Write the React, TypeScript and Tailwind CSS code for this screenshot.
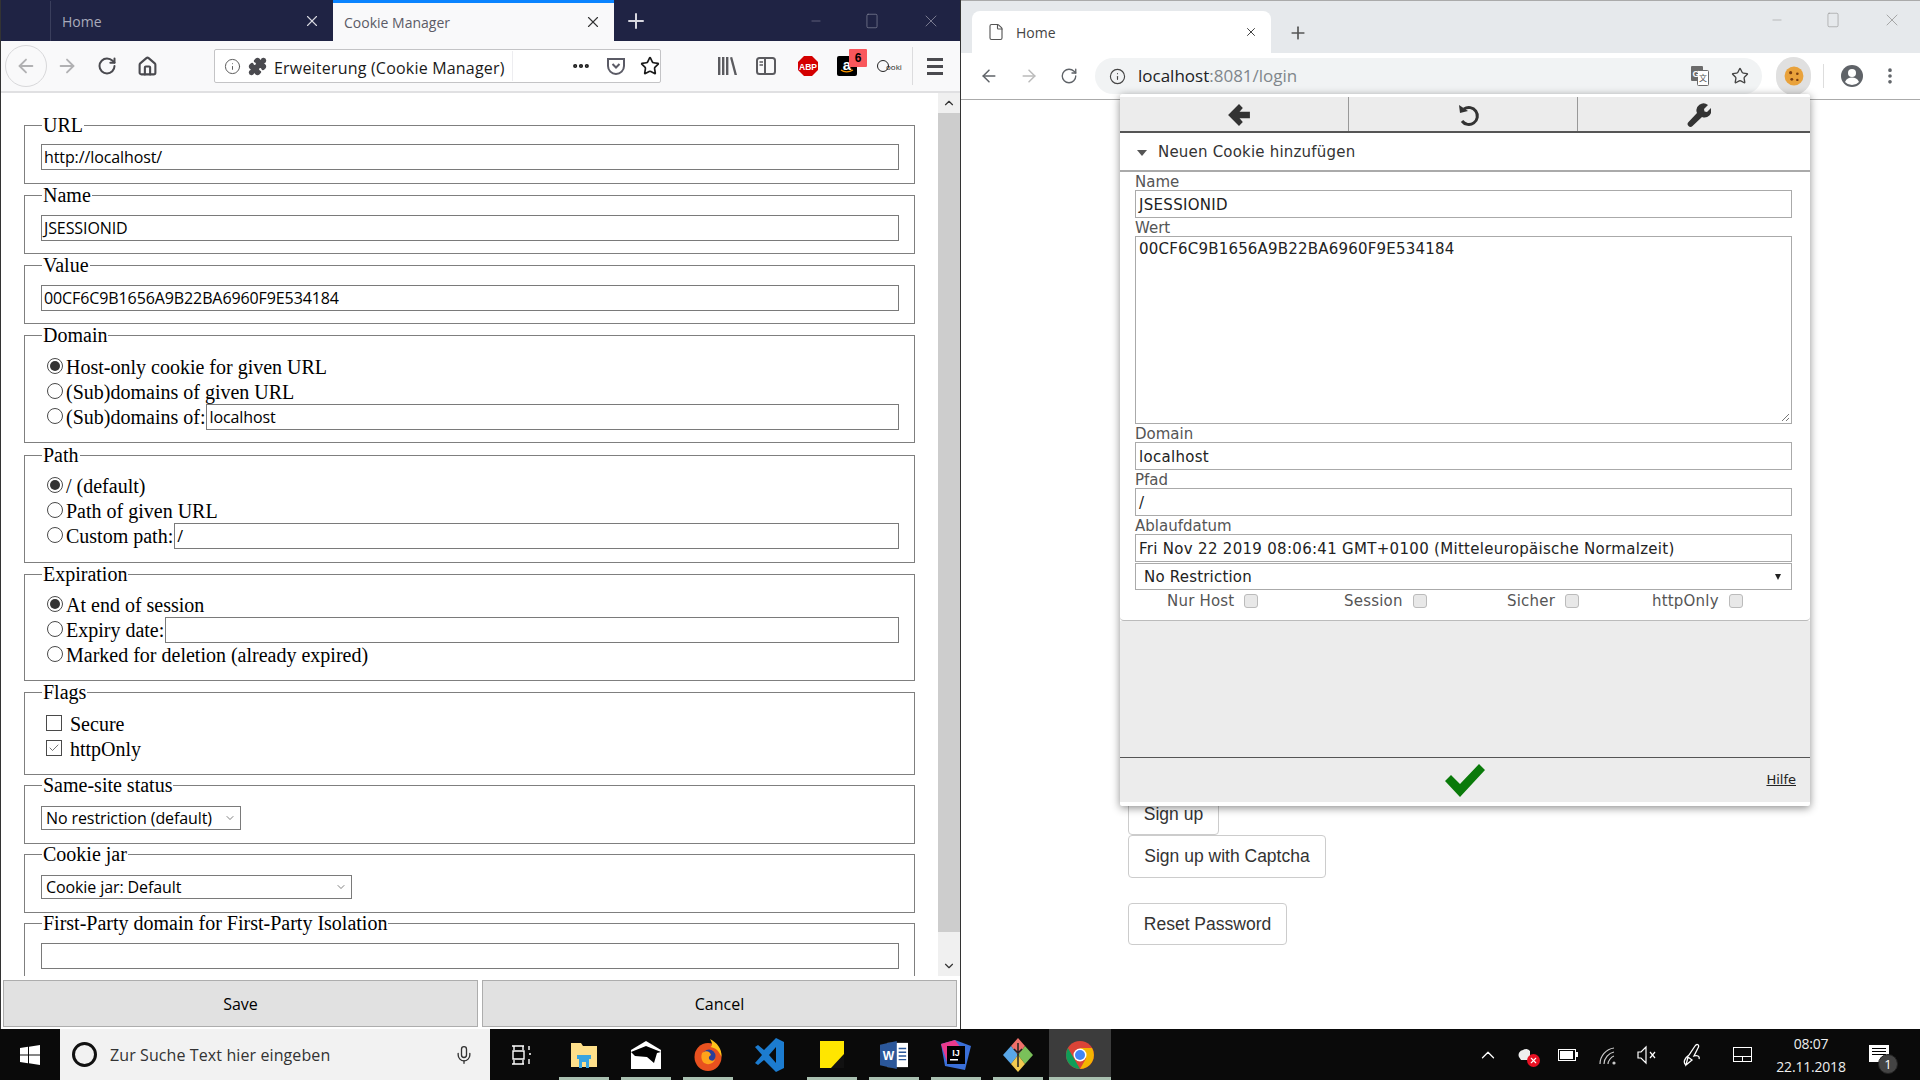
import React from 'react';
import {
  ArrowLeft,
  ArrowRight,
  RotateCw,
  House,
  Info,
  Puzzle,
  Ellipsis,
  Star,
  X,
  Plus,
  Minus,
  Square,
  ChevronUp,
  ChevronDown,
  File,
  EllipsisVertical,
  Mic,
  Check,
} from 'lucide-react';

const serif = 'font-["Liberation_Serif","Times_New_Roman",serif]';
const ui = 'font-["Open_Sans","Noto_Sans",sans-serif]';

const Field = ({ legend, children, className = '' }: { legend: string; children: React.ReactNode; className?: string }) => (
  <fieldset className={`border border-[#7f7f7f] pl-[16px] pr-[15px] ${className}`}>
    <legend className={`ml-[1px] px-[1px] h-[21px] leading-[21px] text-[20px] text-black ${serif}`}>{legend}</legend>
    {children}
  </fieldset>
);

const TextBox = ({ value, className = '' }: { value: string; className?: string }) => (
  <div className={`h-[26px] border border-[#7a7a7a] bg-white pl-[2px] text-[16px] leading-[24px] tracking-[-0.1px] text-black ${ui} ${className}`}>
    {value}
  </div>
);

const Radio = ({ checked = false }: { checked?: boolean }) => (
  <span className="w-[16px] h-[16px] -mt-[2px] rounded-full border border-[#4a4a4a] bg-white flex items-center justify-center shrink-0 mr-[3px]">
    {checked && <span className="w-[10px] h-[10px] rounded-full bg-[#333]" />}
  </span>
);

const RadioRow = ({ label, checked, value }: { label: string; checked?: boolean; value?: string }) => (
  <div className={`flex items-center h-[25px] ml-[6px] text-[20px] text-black ${serif}`}>
    <Radio checked={checked} />
    <span className="whitespace-nowrap mr-[1px]">{label}</span>
    {value !== undefined && <TextBox value={value} className="flex-1" />}
  </div>
);

const Select = ({ label, className }: { label: string; className: string }) => (
  <div className={`h-[24px] border border-[#7a7a7a] bg-white flex items-center justify-between pl-[4px] pr-[4px] text-[16px] tracking-[-0.1px] text-black ${ui} ${className}`}>
    <span>{label}</span>
    <ChevronDown size={12} strokeWidth={1} />
  </div>
);

const FirefoxWindow = () => (
  <div className="w-[960px] flex flex-col border-l border-[#333]">
    {/* tabs */}
    <div className="h-[41px] bg-[#1f2344] flex items-stretch text-[14px] pt-[1px]">
      <div className="w-[50px] border-r border-[#3a3e5c]" />
      <div className={`w-[282px] flex items-center justify-between pl-[11px] pr-[12px] text-[#a9abbb] ${ui}`}>
        <span>Home</span>
        <X size={18} strokeWidth={1.5} className="text-[#d8d8e0]" />
      </div>
      <div className={`w-[281px] -mt-[1px] flex items-center justify-between pl-[11px] pr-[12px] bg-[#f9f9fa] border-t-[3px] border-[#0a84ff] text-[#5b5b66] ${ui}`}>
        <span>Cookie Manager</span>
        <X size={18} strokeWidth={1.5} className="text-[#333]" />
      </div>
      <div className="w-[44px] flex items-center justify-center text-[#d8d8e0]">
        <Plus size={24} strokeWidth={2} />
      </div>
      <div className="flex-1 flex items-center justify-end text-[#8a8c9f] gap-[40px] pr-[19px]">
        <Minus size={14} strokeWidth={1} />
        <Square size={18} strokeWidth={1} className="scale-x-75" />
        <X size={20} strokeWidth={1} />
      </div>
    </div>
    {/* toolbar */}
    <div className="h-[52px] bg-[#f9f9fa] border-b-2 border-[#e0e0e2] flex items-center text-[#4a4a4f]">
      <div className="w-[42px] h-[42px] ml-[4px] rounded-full border border-[#d8d8da] flex items-center justify-center text-[#b1b1b3]">
        <ArrowLeft size={22} />
      </div>
      <ArrowRight size={22} className="ml-[9px] text-[#b1b1b3]" />
      <RotateCw size={20} strokeWidth={2.4} className="ml-[19px]" />
      <House size={21} strokeWidth={2.4} className="ml-[20px]" />
      <div className={`ml-[56px] w-[447px] h-[34px] bg-white border border-[#c4c4c6] rounded-[2px] flex items-center pl-[9px] text-[16px] text-[#1a1a1a] ${ui}`}>
        <Info size={17} strokeWidth={1.4} className="text-[#5b5b5b] shrink-0" />
        <Puzzle size={19} fill="#4a4a4f" className="ml-[7px] text-[#4a4a4f] shrink-0" />
        <span className="ml-[7px] w-[241px] pt-[3px] tracking-[0.2px] whitespace-nowrap">Erweiterung (Cookie Manager)</span>
        <div className="w-px h-[30px] bg-[#ededf0] shrink-0" />
        <Ellipsis size={20} strokeWidth={3} className="ml-[58px] shrink-0" />
        <svg width="20" height="20" viewBox="0 0 20 20" className="ml-[15px] shrink-0" fill="none" stroke="#5b5b66" strokeWidth="2">
          <path d="M2 3h16v7a8 8 0 0 1-16 0z" />
          <path d="M6.5 8l3.5 3.500L13.500 8" />
        </svg>
        <Star size={20} strokeWidth={2} className="ml-[14px] shrink-0" />
      </div>
      <svg width="20" height="22" viewBox="0 0 20 22" className="ml-[56px]" fill="#5b5b5f">
        <rect x="1" y="2" width="2.400" height="18" />
        <rect x="5" y="2" width="2.400" height="18" />
        <rect x="9" y="2" width="2.400" height="18" />
        <path d="M13 2.500l2.200-.6L20 20h-2.400z" />
      </svg>
      <svg width="20" height="20" viewBox="0 0 20 20" className="ml-[19px]" fill="none" stroke="#5b5b5f" strokeWidth="2">
        <rect x="1" y="2" width="18" height="16" rx="2.500" />
        <path d="M9 2v16" />
        <path d="M3.500 6H7M3.500 9H7" strokeWidth="1.400" />
      </svg>
      <svg width="22" height="22" viewBox="0 0 22 22" className="ml-[21px]">
        <path d="M7 1h8l6 6v8l-6 6H7l-6-6V7z" fill="#d40000" />
        <text x="11" y="14.500" textAnchor="middle" fontSize="8.500" fontWeight="700" fill="#fff" fontFamily="Liberation Sans">ABP</text>
      </svg>
      <div className="relative ml-[18px] w-[20px] h-[20px] rounded-[2px] bg-black flex items-center justify-center">
        <span className="text-white text-[15px] leading-[15px] font-bold font-['Liberation_Sans',sans-serif] -mt-[4px]">a</span>
        <svg width="14" height="5" viewBox="0 0 14 5" className="absolute left-[3px] bottom-[2px]" fill="none" stroke="#f90" strokeWidth="1.300">
          <path d="M1 1c3 2.500 8 2.500 12 0" />
        </svg>
        <span className="absolute -top-[7px] left-[12px] w-[18px] h-[18px] rounded-[1px] bg-[#f9575c] text-black text-center text-[12px] leading-[18px] font-bold font-['Liberation_Sans',sans-serif]">6</span>
      </div>
      <div className={`ml-[20px] w-[22px] h-[20px] flex items-center ${ui}`}>
        <span className="w-[12px] h-[12px] rounded-full border border-[#222] shrink-0" />
        <span className="-ml-[3px] mt-[1px] text-[8px] text-[#222]">ooki</span>
      </div>
      <div className="ml-[13px] w-px h-[38px] bg-[#dcdcde]" />
      <div className="ml-[14px] w-[16px] flex flex-col gap-[4px]">
        <span className="h-[3px] bg-[#4a4a4f]" />
        <span className="h-[3px] bg-[#4a4a4f]" />
        <span className="h-[3px] bg-[#4a4a4f]" />
      </div>
    </div>
    {/* content */}
    <div className="flex h-[883px] overflow-hidden bg-white">
      <div className="flex-1 overflow-hidden pl-[23px] pr-[23px] pt-[22px]">
        <Field legend="URL" className="h-[69px] mb-[1px]"><div className="pt-[8px]"><TextBox value="http://localhost/" /></div></Field>
        <Field legend="Name" className="h-[69px] mb-[1px]"><div className="pt-[9px]"><TextBox value="JSESSIONID" /></div></Field>
        <Field legend="Value" className="h-[69px] mb-[1px]"><div className="pt-[9px]"><TextBox value="00CF6C9B1656A9B22BA6960F9E534184" /></div></Field>
        <Field legend="Domain" className="h-[118px] mb-[2px]">
          <div className="pt-[8px]">
            <RadioRow label="Host-only cookie for given URL" checked />
            <RadioRow label="(Sub)domains of given URL" />
            <RadioRow label="(Sub)domains of:" value="localhost" />
          </div>
        </Field>
        <Field legend="Path" className="h-[118px] mb-[1px]">
          <div className="pt-[7px]">
            <RadioRow label="/ (default)" checked />
            <RadioRow label="Path of given URL" />
            <RadioRow label="Custom path:" value="/" />
          </div>
        </Field>
        <Field legend="Expiration" className="h-[117px] mb-[1px]">
          <div className="pt-[7px]">
            <RadioRow label="At end of session" checked />
            <RadioRow label="Expiry date:" value="" />
            <RadioRow label="Marked for deletion (already expired)" />
          </div>
        </Field>
        <Field legend="Flags" className="h-[93px]">
          <div className={`pt-[8px] ml-[5px] text-[20px] text-black ${serif}`}>
            <div className="flex items-center h-[25px]">
              <span className="w-[16px] h-[16px] -mt-[2px] border border-[#4a4a4a] mr-[8px]" />
              Secure
            </div>
            <div className="flex items-center h-[25px]">
              <span className="w-[16px] h-[16px] -mt-[2px] border border-[#4a4a4a] mr-[8px] flex items-center justify-center text-[#444]">
                <Check size={12} strokeWidth={1.5} />
              </span>
              httpOnly
            </div>
          </div>
        </Field>
        <Field legend="Same-site status" className="h-[69px]">
          <div className="pt-[10px]"><Select label="No restriction (default)" className="w-[200px]" /></div>
        </Field>
        <Field legend="Cookie jar" className="h-[69px]">
          <div className="pt-[10px]"><Select label="Cookie jar: Default" className="w-[311px]" /></div>
        </Field>
        <Field legend="First-Party domain for First-Party Isolation" className="h-[100px]">
          <div className="pt-[9px]"><TextBox value="" /></div>
        </Field>
      </div>
      <div className="w-[22px] bg-[#f0f0f0] flex flex-col items-center h-[883px] shrink-0">
        <div className="h-[20px] shrink-0 flex items-center justify-center text-[#333]"><ChevronUp size={14} strokeWidth={2} /></div>
        <div className="h-[819px] shrink-0 w-full bg-[#cdcdcd]" />
        <div className="h-[20px] shrink-0 mt-[24px] flex items-center justify-center text-[#333]"><ChevronDown size={14} strokeWidth={2} /></div>
      </div>
    </div>
    {/* footer buttons */}
    <div className={`h-[53px] bg-white flex gap-[4px] pl-[2px] pr-[3px] pt-[4px] pb-[2px] text-[16px] text-black ${ui}`}>
      <button className="flex-1 bg-[#e1e1e1] border border-[#adadad]">Save</button>
      <button className="flex-1 bg-[#e1e1e1] border border-[#adadad]">Cancel</button>
    </div>
  </div>
);

const Labelled = ({ label, value }: { label: string; value: string }) => (
  <>
    <div className="h-[18px] pt-[1px] leading-[18px] text-[15px] text-[#555]">{label}</div>
    <div className="h-[28px] border border-[#aaa] px-[3px] leading-[28px] text-[15px] tracking-[0.3px] text-[#222] bg-white whitespace-nowrap">{value}</div>
  </>
);

const Flag = ({ label, className = '' }: { label: string; className?: string }) => (
  <div className={`flex items-center gap-[10px] text-[15px] tracking-[0.2px] text-[#555] ${className}`}>
    <span>{label}</span>
    <span className="w-[14px] h-[14px] rounded-[3px] border border-[#bbb] bg-[#e8e8e8]" />
  </div>
);

const CookiePopup = () => (
  <div className="absolute left-[159px] top-[94px] w-[690px] h-[712px] bg-white shadow-[0_2px_8px_rgba(0,0,0,0.45)] rounded-[2px] flex flex-col font-['DejaVu_Sans',Verdana,sans-serif]">
    <div className="mt-[3px] h-[36px] bg-[#ececec] border-b-2 border-[#555] flex text-[#333]">
      <div className="w-[229px] pl-[10px] pt-[2px] border-r border-[#999] flex items-center justify-center">
        <svg width="24" height="24" viewBox="0 0 22 22" fill="#333">
          <path d="M11 1L1 11l10 10 3.500-3.500-3-3.500H21V8H11.500l3-3.500z" />
        </svg>
      </div>
      <div className="w-[229px] pl-[10px] pt-[2px] border-r border-[#999] flex items-center justify-center">
        <svg width="24" height="24" viewBox="0 0 24 24" fill="none" stroke="#333" strokeWidth="3">
          <path d="M8 6a8.500 8.500 0 1 1-2 12" />
          <path d="M3 2l1 8 8-2z" fill="#333" strokeWidth="0" />
        </svg>
      </div>
      <div className="flex-1 pl-[10px] pt-[2px] flex items-center justify-center">
        <svg width="24" height="24" viewBox="0 0 24 24" fill="#333">
          <path d="M21 2l-4 4 .5 2.500 2.500.5 4-4a7 7 0 0 1-9 9L5.500 23a2.500 2.500 0 0 1-4-4L10 10A7 7 0 0 1 21 2z" />
        </svg>
      </div>
    </div>
    <div className="h-[39px] pt-[2px] border-b-2 border-[#aaa] flex items-center pl-[17px] text-[15px] tracking-[0.2px] text-[#333]">
      <span className="w-0 h-0 border-l-[5px] border-r-[5px] border-t-[6px] border-l-transparent border-r-transparent border-t-[#555] mr-[11px]" />
      Neuen Cookie hinzufügen
    </div>
    <div className="h-[449px] pl-[15px] pr-[18px] flex flex-col rounded-b-[4px] border-b border-[#bbb]">
      <Labelled label="Name" value="JSESSIONID" />
      <div className="h-[18px] pt-[1px] leading-[18px] text-[15px] text-[#555]">Wert</div>
      <div className="h-[188px] shrink-0 border border-[#aaa] px-[3px] pt-[2px] text-[15px] tracking-[0.2px] leading-[20px] text-[#222] relative">
        00CF6C9B1656A9B22BA6960F9E534184
        <svg width="9" height="9" viewBox="0 0 9 9" className="absolute right-[1px] bottom-[1px]" stroke="#777">
          <path d="M1 8l7-7M5 8l3-3" />
        </svg>
      </div>
      <Labelled label="Domain" value="localhost" />
      <Labelled label="Pfad" value="/" />
      <Labelled label="Ablaufdatum" value="Fri Nov 22 2019 08:06:41 GMT+0100 (Mitteleuropäische Normalzeit)" />
      <div className="mt-[1px] h-[27px] shrink-0 border border-[#aaa] pl-[8px] pr-[10px] flex items-center justify-between text-[15px] tracking-[0.2px] text-[#222]">
        <span className="pt-[1px]">No Restriction</span>
        <span className="w-0 h-0 border-l-[3px] border-r-[3px] border-t-[6px] border-l-transparent border-r-transparent border-t-[#222]" />
      </div>
      <div className="h-[22px] shrink-0 flex items-center">
        <Flag label="Nur Host" className="ml-[32px] w-[177px]" />
        <Flag label="Session" className="w-[163px]" />
        <Flag label="Sicher" className="w-[145px]" />
        <Flag label="httpOnly" />
      </div>
    </div>
    <div className="h-[137px] bg-[#ececec] border-b border-[#555]" />
    <div className="h-[44px] bg-[#ececec] relative flex items-center justify-center">
      <svg width="42" height="34" viewBox="0 0 42 34" fill="#0a7a0a">
        <path d="M1 18l6-6 9 9L35 1l6 6-25 27z" />
      </svg>
      <span className="absolute right-[14px] text-[13px] text-[#222] underline">Hilfe</span>
    </div>
  </div>
);

const ChromeWindow = () => (
  <div className="flex-1 relative flex flex-col bg-white border-l border-[#333]">
    <div className="h-[53px] bg-[#e6e9ec] border-t border-[#aaa] flex items-end relative">
      <div className={`ml-[11px] w-[299px] h-[42px] bg-white rounded-t-[8px] flex items-center pl-[15px] pr-[13px] text-[14px] text-[#444] ${ui}`}>
        <File size={18} strokeWidth={1.5} className="text-[#555]" />
        <span className="ml-[11px] flex-1">Home</span>
        <X size={14} strokeWidth={1.6} className="text-[#333]" />
      </div>
      <div className="ml-[17px] mb-[10px] text-[#555]"><Plus size={20} strokeWidth={2} /></div>
      <div className="absolute right-[18px] top-[9px] flex items-center gap-[40px] text-[#999]">
        <Minus size={14} strokeWidth={1} />
        <Square size={18} strokeWidth={1} className="scale-x-75" />
        <X size={20} strokeWidth={1} />
      </div>
    </div>
    <div className="h-[47px] border-b border-[#aaa] flex items-center text-[#5f6368] bg-white">
      <ArrowLeft size={20} strokeWidth={1.8} className="ml-[18px]" />
      <ArrowRight size={20} strokeWidth={1.8} className="ml-[20px] text-[#bbb]" />
      <RotateCw size={18} strokeWidth={1.8} className="ml-[21px]" />
      <div className={`ml-[17px] w-[667px] h-[36px] rounded-full bg-[#f1f3f4] flex items-center pl-[14px] pr-[13px] text-[17px] ${ui}`}>
        <Info size={17} strokeWidth={1.6} className="text-[#444]" />
        <span className="ml-[12px] flex-1 text-[#202124]">localhost<span className="text-[#80868b]">:8081/login</span></span>
        <svg width="18" height="20" viewBox="0 0 18 20">
          <rect x="0" y="0" width="12" height="15" rx="1" fill="#6b6b6b" />
          <rect x="6.500" y="4.500" width="11" height="15" rx="1" fill="#fff" stroke="#6b6b6b" />
          <text x="5" y="11" textAnchor="middle" fontSize="9" fontWeight="700" fill="#fff" fontFamily="Liberation Sans">G</text>
          <text x="12" y="15" textAnchor="middle" fontSize="8" fill="#555" fontFamily="Noto Sans CJK SC">文</text>
        </svg>
        <Star size={18} strokeWidth={1.8} className="ml-[22px] text-[#444]" />
      </div>
      <div className="ml-[14px] w-[35px] h-[38px] rounded-full bg-[#e0e0e0] flex items-center justify-center">
        <svg width="20" height="20" viewBox="0 0 18 18">
          <circle cx="9" cy="9" r="8.500" fill="#e9a23b" />
          <circle cx="6" cy="6" r="1.400" fill="#7a3d10" />
          <circle cx="12" cy="7" r="1.200" fill="#7a3d10" />
          <circle cx="7" cy="12" r="1.300" fill="#7a3d10" />
          <circle cx="12" cy="12.500" r="1.100" fill="#7a3d10" />
        </svg>
      </div>
      <div className="ml-[12px] w-px h-[24px] bg-[#ddd]" />
      <svg width="24" height="24" viewBox="0 0 24 24" className="ml-[16px]">
        <circle cx="12" cy="12" r="11" fill="#5f6368" />
        <circle cx="12" cy="9" r="4" fill="#fff" />
        <path d="M5 18c1.500-3.500 4-4.500 7-4.500s5.500 1 7 4.500a9.500 9.500 0 0 1-14 0z" fill="#fff" />
      </svg>
      <EllipsisVertical size={20} strokeWidth={2.4} className="ml-[16px]" />
    </div>
    <div className="flex-1 pl-[167px] pt-[694px] font-['Liberation_Sans',Arial,sans-serif] text-[17.500px] text-[#333]">
      <div className="w-[91px] h-[42px] -mt-[1px] flex items-center justify-center border border-[#ccc] rounded-[4px]">Sign up</div>
      <div className="w-[198px] h-[43px] flex items-center justify-center border border-[#ccc] rounded-[4px]">Sign up with Captcha</div>
      <div className="w-[159px] h-[42px] mt-[25px] flex items-center justify-center border border-[#ccc] rounded-[4px]">Reset Password</div>
    </div>
    <CookiePopup />
  </div>
);

const TaskIcon = ({ children, active = false, open = true }: { children: React.ReactNode; active?: boolean; open?: boolean }) => (
  <div className={`w-[62px] h-[51px] flex items-center justify-center relative ${active ? 'bg-[#3c3c3c]' : ''}`}>
    {children}
    {open && <span className={`absolute bottom-0 h-[3px] bg-[#a9c0b0] ${active ? 'left-0 right-0' : 'left-[6px] right-[6px]'}`} />}
  </div>
);

const Taskbar = () => (
  <div className={`h-[51px] bg-[#0a0a0a] flex items-stretch text-white ${ui}`}>
    <div className="w-[60px] flex items-center justify-center">
      <svg width="20" height="20" viewBox="0 0 20 20" fill="#fff">
        <path d="M0 3l8-1.200V9.500H0zM9 1.700L20 0v9.500H9zM0 10.500h8v7.700L0 17zM9 10.500h11V20L9 18.300z" />
      </svg>
    </div>
    <div className="w-[430px] bg-[#f2f2f2] flex items-center pl-[12px] pr-[16px] text-[16px] text-[#333]">
      <span className="w-[25px] h-[25px] rounded-full border-[3.500px] border-[#111]" />
      <span className="ml-[13px] flex-1 tracking-[0.1px]">Zur Suche Text hier eingeben</span>
      <Mic size={20} strokeWidth={1.6} />
    </div>
    <div className="w-[63px] flex items-center justify-center">
      <svg width="20" height="20" viewBox="0 0 20 20" fill="none" stroke="#fff" strokeWidth="1.400">
        <path d="M0 1h12M0 19h12M1 6h11v8H1zM17 1v4M17 9h2M17 14v5M2 1v4M11 1v4M2 15v4M11 15v4" />
      </svg>
    </div>
    <div className="flex items-stretch">
      <TaskIcon>
        <svg width="28" height="28" viewBox="0 0 28 28">
          <path d="M1 2h10l2 3h14v21H1z" fill="#ffe08a" />
          <path d="M7 14h14v4h-2v9h-3v-6h-4v6H9v-9H7z" fill="#3aa5e0" />
        </svg>
      </TaskIcon>
      <TaskIcon>
        <svg width="30" height="28" viewBox="0 0 30 28">
          <path d="M0 9L15 0l15 9v19H0z" fill="#fff" />
          <path d="M0 11l15-6 15 6-4 1-3 10-7-6-12-1z" fill="#000" />
        </svg>
      </TaskIcon>
      <TaskIcon>
        <svg width="28" height="32" viewBox="0 0 28 32">
          <ellipse cx="14" cy="18" rx="13.500" ry="14" fill="#e8511f" />
          <path d="M16 0c7 4 12 9 11.500 18-3-7-6-9-11-10 3-2 1-5-.5-8z" fill="#ffc21a" />
          <circle cx="15" cy="17" r="6.500" fill="#2a3f9a" />
          <path d="M8 14c4-3 8-2 9 2-2 1-3 3-1 5 2 1 4 1 5-1-1 5-8 7-12 3-2-3-2-6-1-9z" fill="#ffa31a" />
        </svg>
      </TaskIcon>
      <TaskIcon open={false}>
        <svg width="30" height="34" viewBox="0 0 30 34" fill="#1c7cd0">
          <path d="M21 0l8 4v26l-8 4L9 22l-6 5-3-2 7-8-7-8 3-2 6 5zM21 9l-7 8 7 8z" fillRule="evenodd" />
        </svg>
      </TaskIcon>
      <TaskIcon>
        <svg width="24" height="27" viewBox="0 0 24 27">
          <path d="M0 0h24v27H0z" fill="#ffe600" />
          <path d="M24 13v14H11z" fill="#111" />
        </svg>
      </TaskIcon>
      <TaskIcon>
        <svg width="28" height="30" viewBox="0 0 30 30">
          <rect x="8" y="2" width="22" height="26" fill="#fff" />
          <path d="M0 4l18-4v30L0 26z" fill="#2b579a" />
          <text x="9" y="20" textAnchor="middle" fontSize="13" fontWeight="700" fill="#fff" fontFamily="Liberation Sans">W</text>
          <path d="M20 8h8M20 12h8M20 16h8M20 20h8" stroke="#2b579a" strokeWidth="1.500" />
        </svg>
      </TaskIcon>
      <TaskIcon>
        <svg width="30" height="30" viewBox="0 0 30 30">
          <path d="M0 4L14 0l16 6-6 24-20-4z" fill="#3a6fd8" />
          <path d="M0 4L14 0l6 8-14 14z" fill="#ea3a8c" />
          <rect x="6" y="6" width="18" height="18" fill="#000" />
          <text x="15" y="16" textAnchor="middle" fontSize="9" fontWeight="700" fill="#fff" fontFamily="Liberation Sans">IJ</text>
          <rect x="9" y="19" width="8" height="1.500" fill="#fff" />
        </svg>
      </TaskIcon>
      <TaskIcon>
        <svg width="30" height="34" viewBox="0 0 30 34">
          <path d="M15 0l7 8-7 9-7-9z" fill="#f0706a" />
          <path d="M8 8l7 9-7 9-8-9z" fill="#5aa7e8" />
          <path d="M22 8l8 9-8 9-7-9z" fill="#7ac05a" />
          <path d="M15 17l7 9-7 8-7-8z" fill="#f2ca50" />
          <path d="M15 5v24M11 11l4 4 4-4" stroke="#222" strokeWidth="1.500" fill="none" />
        </svg>
      </TaskIcon>
      <TaskIcon active>
        <svg width="28" height="28" viewBox="0 0 28 28">
          <circle cx="14" cy="14" r="14" fill="#db4437" />
          <path d="M14 28A14 14 0 0 1 1.900 7L8 17.500z" fill="#0f9d58" />
          <path d="M14 28a14 14 0 0 0 12-21H14l6 10.500z" fill="#f4b400" />
          <circle cx="14" cy="14" r="6.500" fill="#fff" />
          <circle cx="14" cy="14" r="5" fill="#4285f4" />
        </svg>
      </TaskIcon>
    </div>
    <div className="flex-1" />
    <div className="flex items-center text-[#fff] pr-[15px]">
      <ChevronUp size={22} strokeWidth={1.400} />
      <div className="relative ml-[18px] w-[20px] h-[20px]">
        <svg width="20" height="20" viewBox="0 0 20 20" fill="#eee">
          <path d="M2 12a5 5 0 0 1 4-7 5 5 0 0 1 7 1v9H4z" />
        </svg>
        <span className="absolute right-[-3px] bottom-[-2px] w-[13px] h-[13px] rounded-full bg-[#e81123] text-white flex items-center justify-center">
          <X size={9} strokeWidth={3} />
        </span>
      </div>
      <span className="ml-[21px] w-[20px] h-[12px] flex items-center">
        <span className="w-[18px] h-[12px] border border-white flex items-center p-[1px]">
          <span className="w-[13px] h-[8px] bg-white" />
        </span>
        <span className="w-[2px] h-[5px] bg-white" />
      </span>
      <svg width="20" height="20" viewBox="0 0 20 20" className="ml-[20px]" fill="none" stroke="#ccc" strokeWidth="1.200">
        <path d="M2 19c0-8 6-15 14-16M6 19c0-6 5-11 10-12M10 19c0-3 3-7 6-8" />
        <circle cx="16" cy="18" r="1" fill="#fff" />
      </svg>
      <svg width="20" height="20" viewBox="0 0 20 20" className="ml-[19px]" fill="none" stroke="#fff" strokeWidth="1.200">
        <path d="M1 7h3l5-5v16l-5-5H1z" />
        <path d="M13 7l5 6M18 7l-5 6" />
      </svg>
      <svg width="22" height="24" viewBox="0 0 22 24" className="ml-[25px]" fill="none" stroke="#fff" strokeWidth="1.300">
        <path d="M4 22c-4-3 0-8 3-10l6-9c2-3 5-1 3 2l-4 8c3-1 6 0 5 3M4 22l2-8 4 3z" />
      </svg>
      <span className="ml-[29px] w-[19px] h-[15px] border border-white relative">
        <span className="absolute left-0 right-0 top-[8px] h-px bg-white" />
        <span className="absolute left-[8px] top-[8px] bottom-0 w-px bg-white" />
      </span>
      <div className="ml-[16px] w-[86px] flex flex-col items-center text-[14px] leading-[23px] tracking-[-0.2px] text-[#eee]">
        <span>08:07</span>
        <span>22.11.2018</span>
      </div>
      <div className="relative ml-[11px] w-[40px] h-[51px]">
        <span className="absolute left-[4px] top-[16px] w-[20px] h-[17px] bg-white flex flex-col gap-[2px] p-[3px]">
          <span className="h-px bg-black" />
          <span className="h-px bg-black" />
          <span className="h-px bg-black" />
        </span>
        <span className="absolute left-[13px] top-[25px] w-[20px] h-[20px] rounded-full bg-[#444] border border-[#222] text-white text-[13px] leading-[18px] text-center">1</span>
      </div>
    </div>
  </div>
);

export default function App() {
  return (
    <div className="w-[1920px] h-[1080px] overflow-hidden bg-white flex flex-col">
      <div className="h-[1029px] flex overflow-hidden">
        <FirefoxWindow />
        <ChromeWindow />
      </div>
      <Taskbar />
    </div>
  );
}
